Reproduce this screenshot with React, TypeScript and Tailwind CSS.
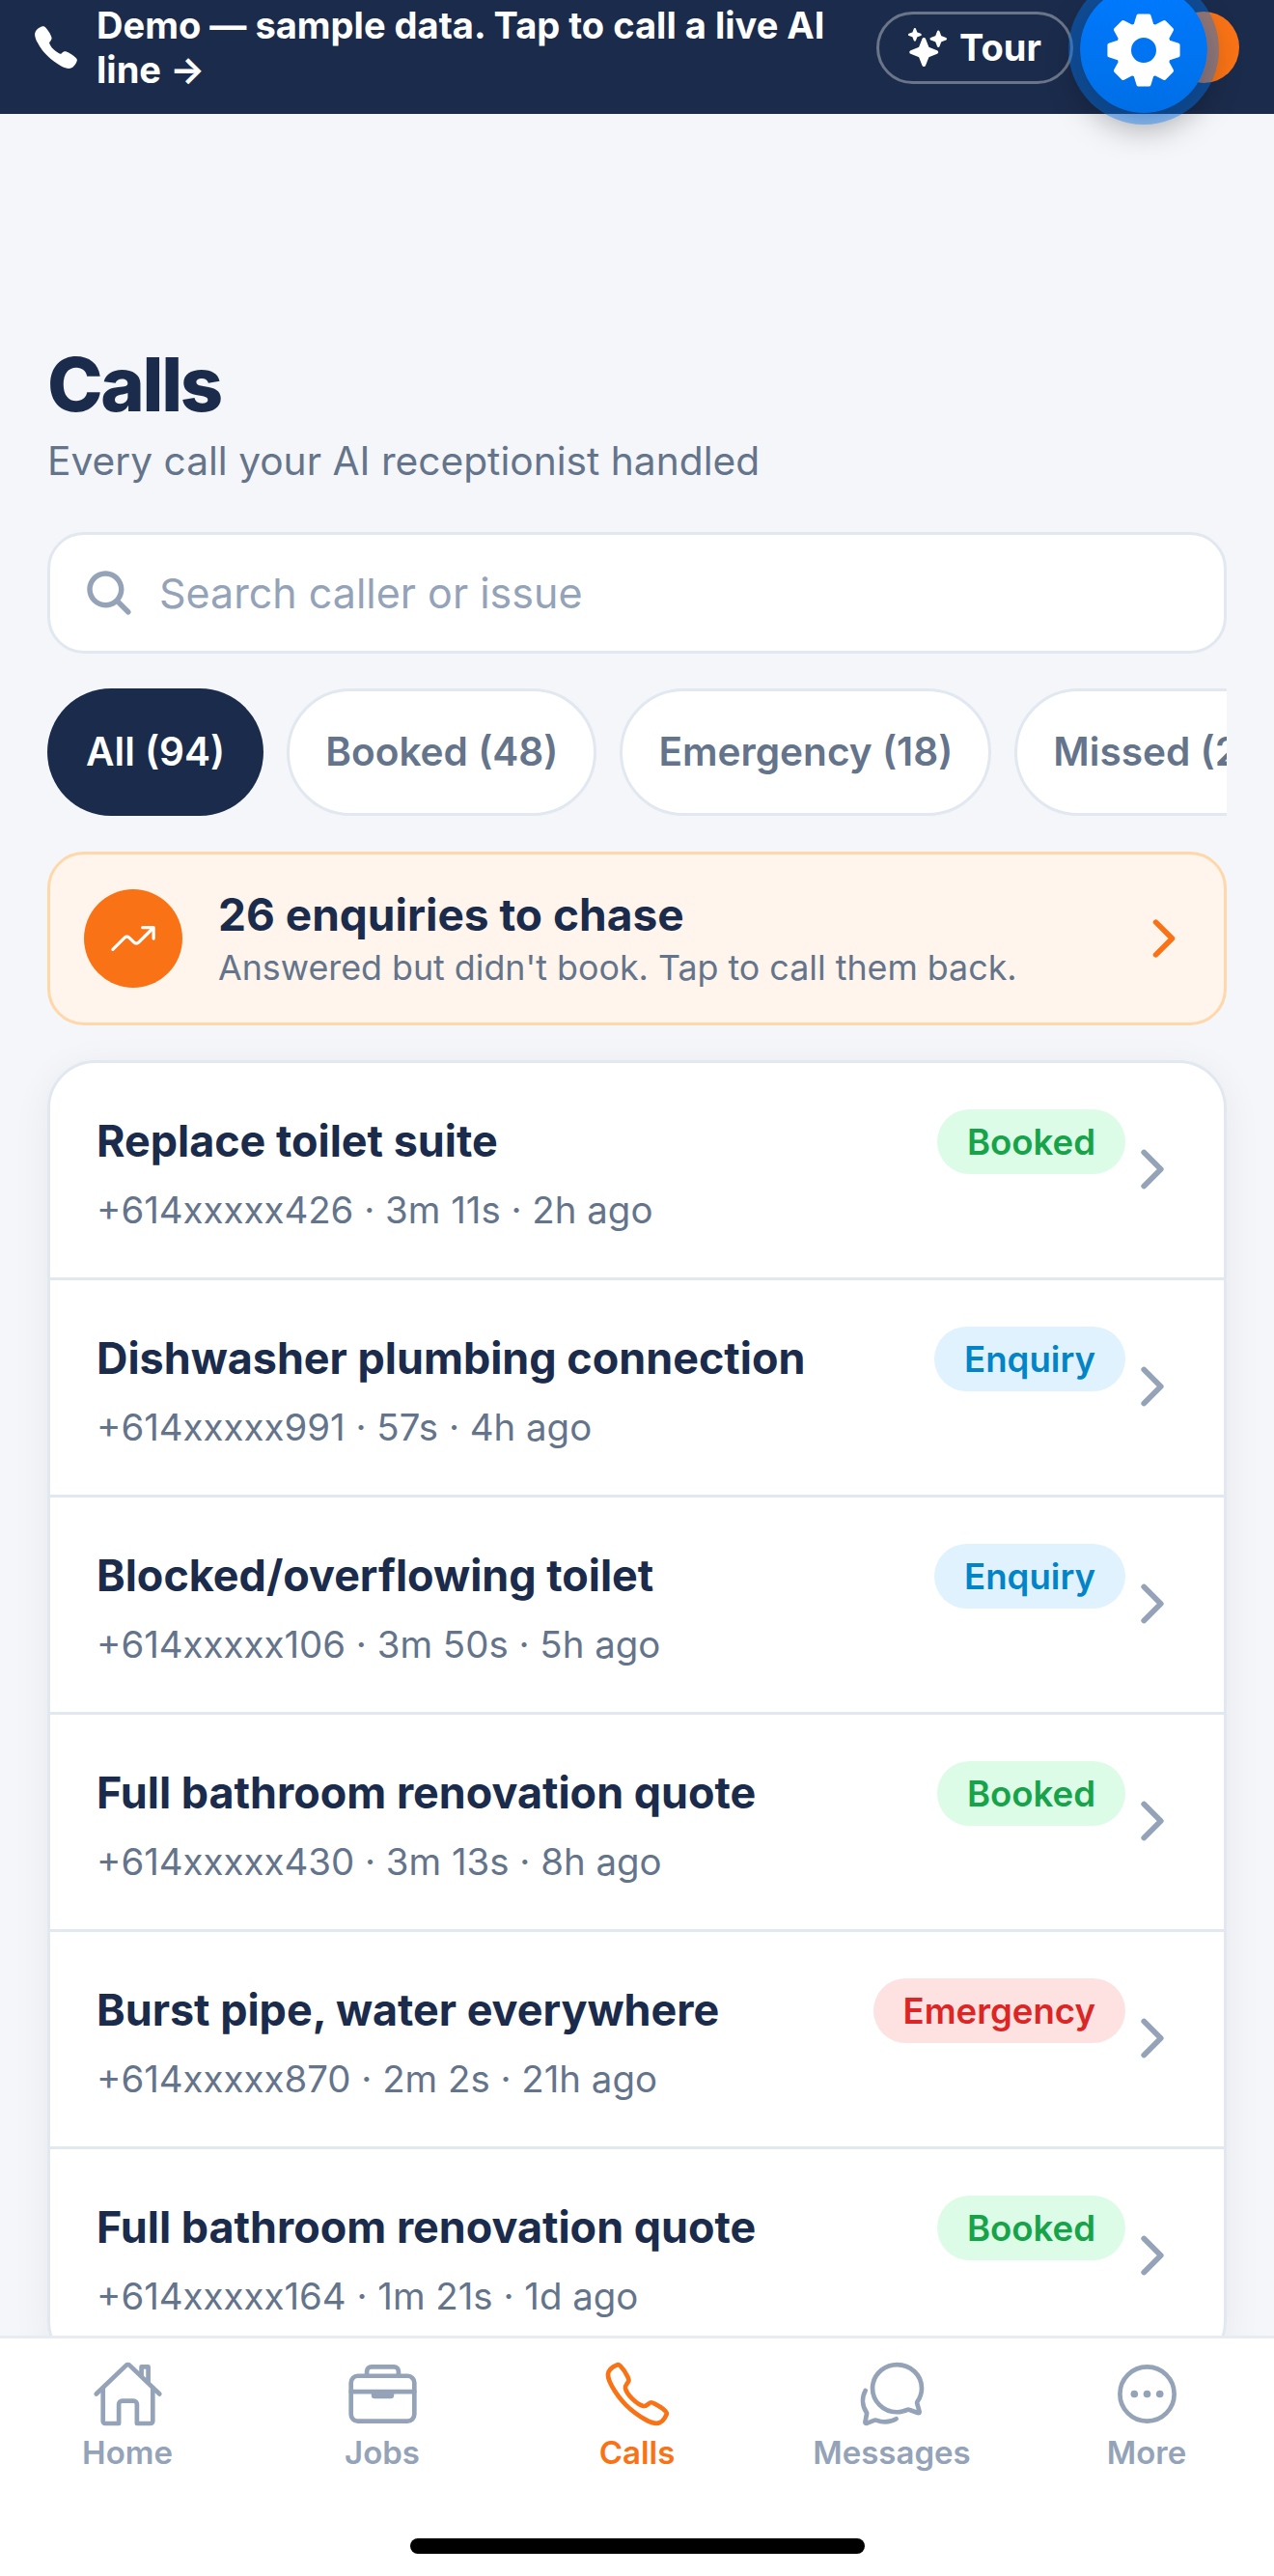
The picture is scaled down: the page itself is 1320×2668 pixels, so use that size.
import React from "react";
import {
  IoCall, IoSparkles, IoSearch, IoTrendingUpOutline, IoChevronForward,
  IoHomeOutline, IoBriefcaseOutline, IoCallOutline, IoChatbubblesOutline, IoEllipsisHorizontalCircleOutline,
} from "react-icons/io5";

const rows = [
  ["Replace toilet suite", "+614xxxxx426 · 3m 11s · 2h ago", "Booked"],
  ["Dishwasher plumbing connection", "+614xxxxx991 · 57s · 4h ago", "Enquiry"],
  ["Blocked/overflowing toilet", "+614xxxxx106 · 3m 50s · 5h ago", "Enquiry"],
  ["Full bathroom renovation quote", "+614xxxxx430 · 3m 13s · 8h ago", "Booked"],
  ["Burst pipe, water everywhere", "+614xxxxx870 · 2m 2s · 21h ago", "Emergency"],
  ["Full bathroom renovation quote", "+614xxxxx164 · 1m 21s · 1d ago", "Booked"],
];

function gearPath() {
  const pts: string[] = [];
  for (let i = 0; i < 8; i++) {
    const a = (i * Math.PI) / 4 - Math.PI / 2;
    const list: [number, number][] = [
      [27, -0.32],
      [36, -0.152],
      [36, 0.152],
      [27, 0.32],
    ];
    for (const [r, d] of list) {
      pts.push(`${(r * Math.cos(a + d)).toFixed(2)} ${(r * Math.sin(a + d)).toFixed(2)}`);
    }
  }
  return `M${pts.join("L")}Z M15 0A15 15 0 1 0 -15 0A15 15 0 1 0 15 0Z`;
}

function Gear() {
  return (
    <svg width="80" height="80" viewBox="-40 -40 80 80" className="mt-[2px]">
      <path d={gearPath()} fill="white" fillRule="evenodd" stroke="white" strokeWidth="4" strokeLinejoin="round" />
    </svg>
  );
}

function Badge({ kind }: { kind: string }) {
  const cls =
    kind === "Booked"
      ? "bg-[#dcfce7] text-[#16a34a]"
      : kind === "Enquiry"
        ? "bg-[#e0f2fe] text-[#0284c7]"
        : "bg-[#fee2e2] text-[#dc2626]";
  return <span className={`h-[67px] rounded-full px-[31px] pt-[2px] flex items-center text-[36.6px] font-semibold ${cls}`}>{kind}</span>;
}

function Row({ title, sub, kind, last }: { title: string; sub: string; kind: string; last: boolean }) {
  return (
    <div className={`h-[225px] shrink-0 flex pl-[48px] pr-[43px] pt-[48px] ${last ? "" : "border-b-[3px] border-[#e2e8f0]"}`}>
      <div className="flex-1 min-w-0 pt-[5px]">
        <div className="text-[44.9px] leading-[56px] font-bold text-[#1b2b4b]">{title}</div>
        <div className="mt-[17px] text-[38.4px] leading-[52px] text-[#64748b]">{sub}</div>
      </div>
      <div className="flex items-start">
        <Badge kind={kind} />
        <IoChevronForward className="mt-[31px] ml-[-3px] text-[#94a3b8]" size={62} />
      </div>
    </div>
  );
}

function NavItem({ icon, label, active }: { icon: React.ReactNode; label: string; active?: boolean }) {
  return (
    <div className={`flex-1 flex flex-col items-center ${active ? "text-[#f97316]" : "text-[#94a3b8]"}`}>
      <div className="h-[70px] flex items-center justify-center">{icon}</div>
      <div className="mt-[6px] text-[33px] leading-[40px] font-semibold">{label}</div>
    </div>
  );
}

export default function App() {
  return (
    <div className="relative w-[1320px] h-[2668px] overflow-hidden bg-[#f5f6fa] flex flex-col font-['Inter',sans-serif]">
      <header className="relative h-[118px] shrink-0 bg-[#1b2b4b] flex items-center pl-[33px] pb-[20px]">
        <IoCall className="text-white shrink-0" size={50} />
        <div className="ml-[17px] w-[770px] text-[38.1px] leading-[46px] font-bold text-white">Demo — sample data. Tap to call a live AI line →</div>
        <div className="ml-[38px] shrink-0 w-[204px] h-[75px] rounded-full border-[3px] border-white/35 flex items-center justify-center gap-[13px] text-white text-[38px] font-bold">
          <IoSparkles size={40} />
          Tour
        </div>
      </header>

      <div className="absolute left-[1210px] top-[12px] w-[74px] h-[74px] rounded-full bg-[#f97316]" />
      <div className="absolute left-[1119px] top-[-15px] w-[132px] h-[132px] rounded-full bg-linear-to-b from-[#007aff] to-[#006fe6] ring-[12px] ring-[#007aff]/40 shadow-[0_14px_34px_rgba(0,0,0,0.35)] flex items-center justify-center text-white">
        <Gear />
      </div>

      <main className="flex-1 min-h-0 overflow-hidden px-[49px] pt-[235px]">
        <h1 className="text-[77.5px] leading-[90px] font-extrabold tracking-[-0.03em] text-[#1b2b4b]">Calls</h1>
        <p className="mt-[9px] text-[40.7px] leading-[52px] text-[#64748b]">Every call your AI receptionist handled</p>

        <div className="mt-[47px] h-[126px] rounded-[38px] border-[3px] border-[#e2e8f0] bg-white flex items-center pl-[33px]">
          <IoSearch className="text-[#94a3b8]" size={56} />
          <span className="ml-[24px] text-[43px] text-[#94a3b8]">Search caller or issue</span>
        </div>

        <div className="mt-[36px] flex gap-[24px] overflow-hidden">
          <div className="shrink-0 h-[132px] px-[40px] rounded-full bg-[#1b2b4b] text-white text-[40.6px] font-semibold flex items-center">All (94)</div>
          {["Booked (48)", "Emergency (18)", "Missed (21)"].map((t) => (
            <div key={t} className="shrink-0 h-[132px] px-[37px] rounded-full bg-white border-[3px] border-[#e2e8f0] text-[#64748b] text-[40.6px] font-semibold flex items-center">{t}</div>
          ))}
        </div>

        <div className="mt-[37px] h-[180px] rounded-[38px] border-[3px] border-[#fed7aa] bg-[#fff5ec] flex items-center pl-[35px] pr-[32px]">
          <div className="w-[102px] h-[102px] rounded-full bg-[#f97316] flex items-center justify-center text-white shrink-0">
            <IoTrendingUpOutline size={52} />
          </div>
          <div className="ml-[37px] flex-1">
            <div className="text-[46px] leading-[56px] font-bold text-[#1b2b4b]">26 enquiries to chase</div>
            <div className="mt-[4px] text-[35.8px] leading-[46px] text-[#64748b]">Answered but didn't book. Tap to call them back.</div>
          </div>
          <IoChevronForward className="text-[#f97316]" size={60} />
        </div>

        <div className="mt-[36px] rounded-[50px] border-[3px] border-[#e2e8f0] bg-white overflow-hidden shadow-[0_8px_40px_rgba(15,23,42,0.06)] flex flex-col">
          {rows.map((r, i) => (
            <Row key={i} title={r[0]} sub={r[1]} kind={r[2]} last={i === rows.length - 1} />
          ))}
        </div>
      </main>

      <nav className="relative h-[249px] shrink-0 bg-white border-t-[3px] border-[#e8ebf1] flex pt-[22px]">
        <NavItem icon={<IoHomeOutline size={75} />} label="Home" />
        <NavItem icon={<IoBriefcaseOutline size={75} />} label="Jobs" />
        <NavItem icon={<IoCallOutline size={75} />} label="Calls" active />
        <NavItem icon={<IoChatbubblesOutline size={75} />} label="Messages" />
        <NavItem icon={<IoEllipsisHorizontalCircleOutline size={75} />} label="More" />
        <div className="absolute left-[425px] top-[207px] w-[471px] h-[16px] rounded-full bg-black" />
      </nav>
    </div>
  );
}
